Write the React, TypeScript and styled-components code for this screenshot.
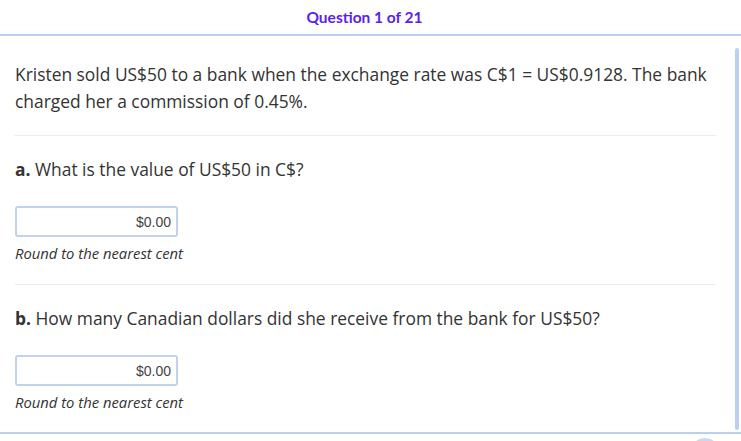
import styled, { createGlobalStyle } from 'styled-components';

// ─── Global ───────────────────────────────────────────────────────────────────
const GlobalStyle = createGlobalStyle`
  html, body {
    margin: 0;
    padding: 0;
    height: 441px;
    overflow: hidden;
    background: #fff;
  }
  * { box-sizing: border-box; }
`;

const lineBlue = '#bccfee';

// ─── Styles ───────────────────────────────────────────────────────────────────
const Page = styled.div`
  width: 741px;
  height: 441px;
  display: flex;
  flex-direction: column;
  overflow: hidden;
  font-family: 'Open Sans', 'Liberation Sans', sans-serif;
  color: #333;
`;

const Header = styled.header`
  flex-shrink: 0;
  height: 36px;
  padding: 1px 12px 0 0;
  border-bottom: 2px solid ${lineBlue};
  text-align: center;
  font-family: Lato, 'Open Sans', sans-serif;
  font-weight: 700;
  font-size: 15.5px;
  line-height: 33px;
  color: #5a22f0;
`;

const Body = styled.div`
  flex-shrink: 0;
  height: 398px;
  display: flex;
  border-bottom: 2px solid ${lineBlue};
`;

const Main = styled.main`
  flex: 1;
  padding: 25px 19px 0 15px;
`;

const ScrollTrack = styled.div`
  width: 6px;
  padding: 12px 2px 2px 0;
  display: flex;
`;

const ScrollThumb = styled.div`
  flex: 1;
  background: ${lineBlue};
  border-radius: 2px;
`;

const Intro = styled.p`
  margin: 0;
  font-size: 17.4px;
  line-height: 27px;
`;

const Section = styled.section<{ $gap: number }>`
  border-top: 1px solid #ebebeb;
  padding: 20px 0 0;
  margin-top: ${(p) => p.$gap}px;
`;

const Prompt = styled.p`
  margin: 0;
  font-size: 17.4px;
  line-height: 27px;
  b { font-weight: 700; }
`;

const Answer = styled.input`
  display: block;
  margin-top: 23px;
  width: 163px;
  height: 31px;
  border: 2px solid #c0d2ef;
  border-radius: 3px;
  padding: 0 5px 0 6px;
  text-align: right;
  font-family: 'Liberation Sans', Arial, sans-serif;
  font-size: 14px;
  color: #444;
  background: #fff;
  outline: none;
`;

const Hint = styled.p`
  margin: 6px 0 0;
  font-style: italic;
  font-size: 14.8px;
  line-height: 20px;
`;

const Footer = styled.div`
  flex: 1;
  min-height: 0;
  display: flex;
  justify-content: flex-end;
  padding: 4px 21px 0 0;
`;

const NavDot = styled.div`
  flex-shrink: 0;
  width: 30px;
  height: 30px;
  border-radius: 50%;
  background: #c9d8f1;
`;

// ─── Data ─────────────────────────────────────────────────────────────────────
const parts = [
  { label: 'a.', text: 'What is the value of US$50 in C$?', gap: 20 },
  { label: 'b.', text: 'How many Canadian dollars did she receive from the bank for US$50?', gap: 21 },
];

// ─── Component ────────────────────────────────────────────────────────────────
export default function App() {
  return (
    <Page>
      <GlobalStyle />
      <Header>Question 1 of 21</Header>
      <Body>
        <Main>
          <Intro>
            Kristen sold US$50 to a bank when the exchange rate was C$1 = US$0.9128. The bank
            charged her a commission of 0.45%.
          </Intro>
          {parts.map((part) => (
            <Section key={part.label} $gap={part.gap}>
              <Prompt>
                <b>{part.label}</b> {part.text}
              </Prompt>
              <Answer readOnly value="$0.00" />
              <Hint>Round to the nearest cent</Hint>
            </Section>
          ))}
        </Main>
        <ScrollTrack>
          <ScrollThumb />
        </ScrollTrack>
      </Body>
      <Footer>
        <NavDot />
      </Footer>
    </Page>
  );
}
